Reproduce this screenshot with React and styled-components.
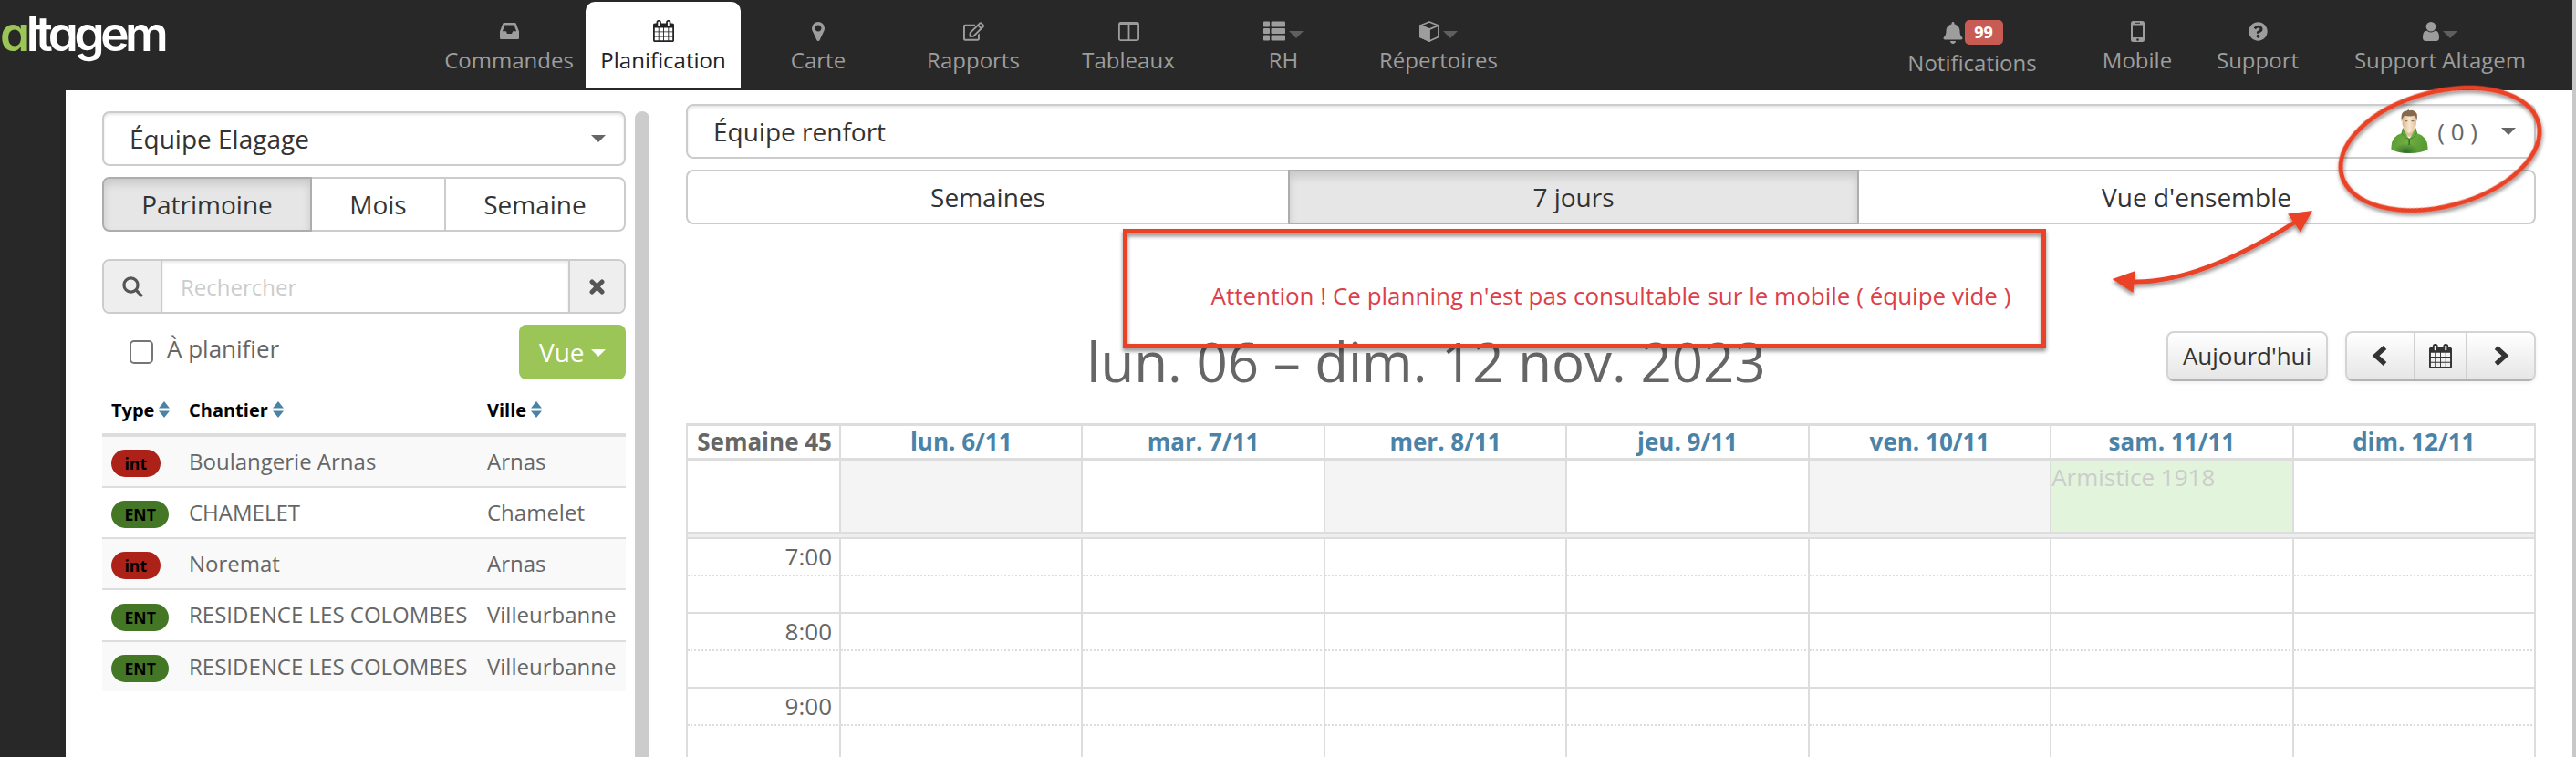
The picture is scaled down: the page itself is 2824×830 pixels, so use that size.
import React from 'react';
import styled, { createGlobalStyle, css } from 'styled-components';
import { FaBell, FaQuestionCircle, FaRegEdit, FaThList } from 'react-icons/fa';

const GlobalStyle = createGlobalStyle`
  *, *::before, *::after { box-sizing: border-box; }
  body { margin: 0; background: #fff; overflow: hidden; }
`;

const Page = styled.div`
  position: relative;
  display: flex;
  flex-direction: column;
  width: 2824px;
  height: 830px;
  overflow: hidden;
  background: #fff;
  border-right: 4px solid #c8c8c8;
  font-family: 'Open Sans', 'Liberation Sans', sans-serif;
  font-size: 26px;
  color: #666;
`;

/* ---------- top bar ---------- */
const TopBar = styled.header`
  display: flex;
  flex: none;
  height: 99px;
  background: #282828;
`;
const Logo = styled.div`
  flex: none;
  width: 474px;
  padding: 5px 0 0;
  font-family: Inter, Lato, sans-serif;
  font-size: 53px;
  font-weight: 600;
  font-feature-settings: 'cv11' 1;
  line-height: 64px;
  letter-spacing: -4.4px;
  color: #fff;
`;
const LogoAccent = styled.span`
  color: #9bc557;
`;
const Nav = styled.nav`
  display: flex;
  margin-left: ${(p) => (p.$end ? 'auto' : '0')};
`;
const NavItem = styled.a`
  display: flex;
  flex-direction: column;
  align-items: center;
  width: ${(p) => p.$width || 170}px;
  height: 94px;
  margin-top: 2px;
  padding-top: 20px;
  border-radius: 10px 10px 0 0;
  font-size: 24px;
  line-height: 30px;
  color: #9d9d9d;
  ${(p) => p.$active && css`
    background: #fff;
    color: #222;
  `}
`;
const NavIcon = styled.span`
  display: flex;
  align-items: center;
  gap: 4px;
  height: ${(p) => (p.$tall ? 27 : 24)}px;
  margin-bottom: 5px;
  svg { display: block; }
`;
const Badge = styled.span`
  margin-left: -3px;
  width: 42px;
  height: 27px;
  border-radius: 5px;
  background: #c95b55;
  color: #fff;
  font-size: 18px;
  font-weight: 700;
  line-height: 27px;
  text-align: center;
`;
const Caret = styled.i`
  width: 0;
  height: 0;
  border: 8px solid transparent;
  border-bottom-width: 0;
  border-top-color: ${(p) => p.$color || '#666'};
  margin-top: ${(p) => p.$drop || 0}px;
`;

/* ---------- body ---------- */
const Body = styled.div`
  display: flex;
  flex: 1;
  min-height: 0;
`;
const Rail = styled.div`
  flex: none;
  width: 72px;
  background: #282828;
`;
const SidePanel = styled.aside`
  display: flex;
  flex-direction: column;
  flex: none;
  width: 574px;
  margin-left: 40px;
  padding-top: 23px;
`;
const ScrollThumb = styled.div`
  flex: none;
  width: 16px;
  margin: 23px 40px 0 10px;
  border-radius: 8px 8px 0 0;
  background: #ccc;
`;
const SelectBox = styled.div`
  display: flex;
  align-items: center;
  flex: none;
  height: 60px;
  padding: 0 20px 0 28px;
  border: 2px solid #ccc;
  border-radius: 8px;
  box-shadow: inset 0 2px 3px rgba(0, 0, 0, 0.1);
  font-size: 28px;
  color: #333;
`;
const SelectLabel = styled.span`
  flex: 1;
`;
const TeamCount = styled.span`
  margin: 0 26px 0 10px;
  font-size: 26px;
  color: #666;
`;
const Tabs = styled.div`
  display: flex;
  flex: none;
  height: 60px;
  margin-top: 12px;
`;
const Tab = styled.button`
  width: ${(p) => p.$width}px;
  margin-left: -2px;
  padding: 0;
  border: 2px solid #ccc;
  background: #fff;
  font: 28px/54px 'Open Sans', sans-serif;
  color: #333;
  &:first-child { margin-left: 0; border-radius: 8px 0 0 8px; }
  &:last-child { border-radius: 0 8px 8px 0; }
  ${(p) => p.$active && css`
    position: relative;
    border-color: #adadad;
    background: #e6e6e6;
    box-shadow: inset 0 6px 10px rgba(0, 0, 0, 0.125);
  `}
`;
const SearchBar = styled.div`
  display: flex;
  flex: none;
  height: 60px;
  margin-top: 30px;
  border: 2px solid #ccc;
  border-radius: 8px;
  overflow: hidden;
`;
const SearchAddon = styled.span`
  display: flex;
  align-items: center;
  justify-content: center;
  width: ${(p) => p.$width}px;
  background: #eee;
  color: #555;
`;
const SearchField = styled.div`
  flex: 1;
  padding-left: 20px;
  border: solid #ccc;
  border-width: 0 2px;
  box-shadow: inset 0 2px 3px rgba(0, 0, 0, 0.09);
  font-size: 24px;
  line-height: 57px;
  color: #ccc;
`;
const FilterRow = styled.div`
  display: flex;
  align-items: center;
  flex: none;
  height: 60px;
  margin-top: 12px;
  padding-left: 30px;
`;
const CheckSquare = styled.span`
  width: 26px;
  height: 26px;
  margin: 0 15px 0 0;
  border: 2px solid #767676;
  border-radius: 5px;
`;
const FilterLabel = styled.span`
  flex: 1;
  padding-bottom: 8px;
`;
const ViewButton = styled.button`
  display: flex;
  align-items: center;
  gap: 7px;
  width: 117px;
  height: 60px;
  padding: 0 0 0 22px;
  border: 0;
  border-radius: 8px;
  background: #9bc557;
  font: 28px 'Open Sans', sans-serif;
  color: #fff;
`;

const SiteTable = styled.div`
  display: flex;
  flex-direction: column;
  margin-top: 9px;
`;
const SiteRow = styled.div`
  display: grid;
  grid-template-columns: 85px 327px 162px;
  align-items: center;
  height: ${(p) => p.$height || 56}px;
  border-bottom: 2px solid ${(p) => (p.$last ? 'transparent' : '#ddd')};
  background: ${(p) => (p.$odd ? '#f9f9f9' : '#fff')};
  background-clip: padding-box;
  font-size: 24px;
`;
const SiteHead = styled(SiteRow)`
  height: 54px;
  border-bottom: 4px solid #ddd;
  font-size: 20px;
  font-weight: 700;
  color: #000;
`;
const HeadCell = styled.div`
  display: flex;
  align-items: center;
  gap: 5px;
  padding: 0 0 2px 10px;
`;
const TagCell = styled.div`
  padding-left: 10px;
`;
const TextCell = styled.div`
  padding: 0 0 2px 10px;
`;
const Tag = styled.span`
  display: inline-block;
  height: 30px;
  margin-top: 4px;
  padding: 0 14.5px;
  border-radius: 15px;
  background: ${(p) => (p.$red ? '#ad2218' : '#447725')};
  font-size: 17.6px;
  font-weight: 700;
  line-height: 30px;
  color: #000;
  vertical-align: top;
`;

/* ---------- planning ---------- */
const Planning = styled.main`
  display: flex;
  flex-direction: column;
  flex: none;
  width: 2028px;
  padding-top: 15px;
`;
const Warning = styled.p`
  margin: 58px 0 0;
  line-height: 40px;
  text-align: center;
  color: #dc3f49;
`;
const PlanningHead = styled.div`
  display: flex;
  align-items: center;
  flex: none;
  height: 56px;
  margin-top: 18px;
`;
const Title = styled.h1`
  flex: 1;
  margin: 12px 0 0;
  font-size: 60px;
  font-weight: 400;
  line-height: 60px;
  text-align: center;
`;
const HeadButtons = styled.div`
  display: flex;
  flex: none;
  height: 55px;
  margin-left: ${(p) => p.$gap || 0}px;
  border: 2px solid #d4d4d4;
  border-bottom-color: #b3b3b3;
  border-radius: 8px;
  background: linear-gradient(#fff, #e6e6e6);
  box-shadow: 0 2px 4px rgba(0, 0, 0, 0.06);
  color: #333;
`;
const HeadButton = styled.button`
  display: flex;
  align-items: center;
  justify-content: center;
  width: ${(p) => p.$width}px;
  padding: 0;
  border: 0;
  border-left: ${(p) => (p.$divided ? '2px solid #d0d0d0' : '0')};
  background: none;
  font: 26px 'Open Sans', sans-serif;
  color: #333;
`;
const Grid = styled.div`
  flex: none;
  margin-top: 46px;
  border: solid #ddd;
  border-width: 3px 0 0 2px;
`;
const GridRow = styled.div`
  display: grid;
  grid-template-columns: 168px repeat(7, 1fr);
  height: ${(p) => p.$height}px;
  line-height: 37px;
`;
const Cell = styled.div`
  border-right: 2px solid #ddd;
  border-bottom: ${(p) => p.$bottom || '2px solid #ddd'};
  background: ${(p) => p.$fill || 'transparent'};
  color: ${(p) => p.$color || 'inherit'};
  white-space: nowrap;
`;
const TimeCell = styled(Cell)`
  padding-right: 8px;
  line-height: 38px;
  text-align: right;
`;
const WeekCell = styled(TimeCell)`
  font-weight: 700;
  line-height: 34px;
`;
const DayCell = styled(Cell)`
  font-weight: 700;
  line-height: 34px;
  text-align: center;
  color: #4b83a8;
`;
const Divider = styled.div`
  height: 6px;
  border-bottom: 2px solid #ddd;
  border-right: 2px solid #ddd;
  background: #eee;
`;
const Overlay = styled.svg`
  position: absolute;
  left: 0;
  top: 0;
  pointer-events: none;
`;

/* ---------- icons ---------- */
const CAL =
  'M192 1664h288v-288h-288v288zm352 0h320v-288h-320v288zm-352-352h288v-320h-288v320zm352 0h320v-320h-320v320zm-352-384h288v-288h-288v288zm736 736h320v-288h-320v288zm-384-736h320v-288h-320v288zm768 736h288v-288h-288v288zm-384-352h320v-320h-320v320zm-352-864v-288q0-13-9.5-22.5t-22.5-9.5h-64q-13 0-22.5 9.5t-9.5 22.5v288q0 13 9.5 22.5t22.5 9.5h64q13 0 22.5-9.5t9.5-22.5zm736 864h288v-320h-288v320zm-384-384h320v-288h-320v288zm384 0h288v-288h-288v288zm32-480v-288q0-13-9.5-22.5t-22.5-9.5h-64q-13 0-22.5 9.5t-9.5 22.5v288q0 13 9.5 22.5t22.5 9.5h64q13 0 22.5-9.5t9.5-22.5zm384-64v1280q0 52-38 90t-90 38h-1408q-52 0-90-38t-38-90v-1280q0-52 38-90t90-38h128v-96q0-66 47-113t113-47h64q66 0 113 47t47 113v96h384v-96q0-66 47-113t113-47h64q66 0 113 47t47 113v96h128q52 0 90 38t38 90z';
const PIN =
  'M1152 640q0-106-75-181t-181-75-181 75-75 181 75 181 181 75 181-75 75-181zm256 0q0 109-33 179l-364 774q-16 33-47.5 52t-67.5 19-67.5-19-46.5-52l-365-774q-33-70-33-179 0-212 150-362t362-150 362 150 150 362z';
const USER =
  'M1536 1399q0 109-62.5 187t-150.5 78h-854q-88 0-150.5-78t-62.5-187q0-85 8.5-160.5t31.5-152 58.5-131 94-89 134.5-34.5q131 128 313 128t313-128q76 0 134.5 34.5t94 89 58.5 131 31.5 152 8.5 160.5zm-256-887q0 159-112.5 271.5t-271.5 112.5-271.5-112.5-112.5-271.5 112.5-271.5 271.5-112.5 271.5 112.5 112.5 271.5z';

const CalendarIcon = ({ w = 23, h = 24 }) => (
  <svg width={w} height={h} viewBox="64 0 1664 1792" preserveAspectRatio="none" fill="currentColor"><path d={CAL} /></svg>
);
const PinIcon = () => (
  <svg width="14" height="21" viewBox="384 128 1024 1536" fill="currentColor"><path d={PIN} /></svg>
);
const UserIcon = () => (
  <svg width="18" height="21" viewBox="256 128 1280 1536" preserveAspectRatio="none" fill="currentColor"><path d={USER} /></svg>
);
const InboxIcon = () => (
  <svg width="21" height="18" viewBox="0 0 21 18" fill="currentColor">
    <path fillRule="evenodd" d="M4.6 0h11.8q1 0 1.4 1L21 9.6V16.8q0 1.2-1.2 1.2H1.2Q0 18 0 16.8V9.6L3.2 1Q3.6 0 4.6 0zM5.4 2.5L2.9 9.3H6.8L8 12h5l1.2-2.7h3.9L15.6 2.5z" />
  </svg>
);
const ColumnsIcon = () => (
  <svg width="23" height="21" viewBox="0 0 23 21" fill="none" stroke="currentColor" strokeWidth="1.8">
    <rect x="0.9" y="0.9" width="21.2" height="19.2" rx="1.5" />
    <path d="M1 2.2h21M11.5 1v19" />
  </svg>
);
const CubeIcon = () => (
  <svg width="22" height="23" viewBox="0 0 22 23" fill="none" stroke="currentColor" strokeWidth="1.8" strokeLinejoin="round">
    <path d="M11 1L21 5v12.5L11 22 1 17.500V5z" />
    <path d="M1 5l10 4.200L21 5" />
    <path d="M1 5l10 4.200V22L1 17.500z" fill="currentColor" />
  </svg>
);
const PhoneIcon = () => (
  <svg width="15" height="23" viewBox="0 0 15 23" fill="currentColor">
    <path fillRule="evenodd" d="M2.5 0h10Q15 0 15 2.5v18Q15 23 12.500 23h-10Q0 23 0 20.500v-18Q0 0 2.500 0zM2 4.500v13.500h11V4.500zM5 1.800v1h5v-1zM7.500 19.200a1.300 1.300 0 1 0 .01 0z" />
  </svg>
);
const SearchIcon = () => (
  <svg width="23" height="23" viewBox="0 0 23 23" fill="none" stroke="currentColor" strokeWidth="3.2" strokeLinecap="round">
    <circle cx="9.5" cy="9.5" r="7.6" />
    <path d="M15.5 15.5L20.8 20.8" />
  </svg>
);
const CrossIcon = () => (
  <svg width="17" height="17" viewBox="0 0 17 17" fill="none" stroke="currentColor" strokeWidth="5" strokeLinecap="round">
    <path d="M3 3l11 11M14 3L3 14" />
  </svg>
);
const Chevron = ({ right }) => (
  <svg width="20" height="22" viewBox="0 0 20 22" fill="none" stroke="currentColor" strokeWidth="5.2">
    <path d={right ? 'M4.500 2L14.500 11 4.500 20' : 'M14.500 2L4.500 11l10 9'} />
  </svg>
);
const SortIcon = () => (
  <svg width="12" height="18" viewBox="0 0 12 18" fill="#4b83a8">
    <path d="M0 7.5L6 0l6 7.5zM0 10.5h12L6 18z" />
  </svg>
);
const Avatar = () => (
  <svg width="41" height="48" viewBox="0 0 41 48">
    <defs>
      <linearGradient id="coat" x1="0" y1="0" x2="1" y2="0.3">
        <stop offset="0" stopColor="#4c962f" />
        <stop offset="0.55" stopColor="#74ae41" />
        <stop offset="1" stopColor="#579c33" />
      </linearGradient>
      <radialGradient id="shade" cx="0.4" cy="0.95" r="0.35">
        <stop offset="0" stopColor="#2b6b2b" />
        <stop offset="1" stopColor="#2b6b2b" stopOpacity="0" />
      </radialGradient>
      <linearGradient id="skin" x1="0" x2="1">
        <stop offset="0" stopColor="#dcb58d" />
        <stop offset="0.5" stopColor="#f8e6d0" />
        <stop offset="1" stopColor="#e4c09a" />
      </linearGradient>
    </defs>
    <path d="M14 22h12.5L24 32l-4 5-4.500-6z" fill="#f1ece6" />
    <path d="M14 21l6 5 6-5v5l-5.500 4L14 26z" fill="#e3bf99" />
    <path d="M13.500 20.500L12 26Q1 29 0.500 41v3Q8 48 20.500 48T40.500 44V41Q39.500 29 28.500 26L27 20.500 20.200 33z" fill="url(#coat)" />
    <path d="M13.500 20.500L12 26Q1 29 0.500 41v3Q8 48 20.500 48T40.500 44V41Q39.500 29 28.500 26L27 20.500 20.200 33z" fill="url(#shade)" />
    <path d="M13.500 20.500L12 26l4.500 5.500L20 32M27 20.500L28.500 26 24 31.500l-3.500.5" fill="none" stroke="#3c8228" strokeWidth="0.9" />
    <path d="M20.200 32v7" stroke="#2f6d2b" strokeWidth="1.5" />
    <path d="M12.500 9Q12.500 4 20.500 4T28 9v7q-1.500 6-5 8.500-2.700 1.500-5.500 0Q13.500 21 12.500 16z" fill="url(#skin)" />
    <path d="M11.800 13Q10.500 5 14 2.500l2-1 1 .3L19.500 0l.8 1.200L23 .8q5 1.500 5.800 4.700 .5 4-.5 7.500-.5-5-2.300-6.300-5 1.500-11 0-2 1.500-3.200 6.300z" fill="#84694d" />
    <path d="M15.300 12.600h3M22.500 12.600h3" stroke="#8f7358" strokeWidth="1.3" />
  </svg>
);

/* ---------- data ---------- */
const NAV = [
  { label: 'Commandes', icon: <InboxIcon />, width: 168 },
  { label: 'Planification', icon: <CalendarIcon />, active: true },
  { label: 'Carte', icon: <PinIcon /> },
  { label: 'Rapports', icon: <FaRegEdit size={23} /> },
  { label: 'Tableaux', icon: <ColumnsIcon /> },
  { label: 'RH', icon: <FaThList size={24} />, menu: true },
  { label: 'Répertoires', icon: <CubeIcon />, menu: true },
];
const USER_NAV = [
  { label: 'Notifications', icon: <FaBell size={24} />, badge: '99', width: 208 },
  { label: 'Mobile', icon: <PhoneIcon />, width: 154 },
  { label: 'Support', icon: <FaQuestionCircle size={21} />, width: 110 },
  { label: 'Support Altagem', icon: <UserIcon />, menu: true, width: 290 },
];
const SITES = [
  ['int', 'Boulangerie Arnas', 'Arnas'],
  ['ENT', 'CHAMELET', 'Chamelet'],
  ['int', 'Noremat', 'Arnas'],
  ['ENT', 'RESIDENCE LES COLOMBES', 'Villeurbanne'],
  ['ENT', 'RESIDENCE LES COLOMBES', 'Villeurbanne'],
];
const DAYS = [
  { name: 'lun. 6/11', fill: '#f4f4f4' },
  { name: 'mar. 7/11' },
  { name: 'mer. 8/11', fill: '#f4f4f4' },
  { name: 'jeu. 9/11' },
  { name: 'ven. 10/11', fill: '#f4f4f4' },
  { name: 'sam. 11/11', fill: '#e2f4dc', note: 'Armistice 1918' },
  { name: 'dim. 12/11' },
];
const HOURS = ['7:00', '8:00', '9:00'];

const NavEntry = ({ item }) => (
  <NavItem $active={item.active} $width={item.width}>
    <NavIcon $tall={Boolean(item.badge)}>
      {item.icon}
      {item.badge && <Badge>{item.badge}</Badge>}
      {item.menu && <Caret $color="#5f5f5f" $drop={8} />}
    </NavIcon>
    {item.label}
  </NavItem>
);

const Annotations = () => (
  <Overlay width="2824" height="830" viewBox="0 0 2824 830">
    <defs>
      <filter id="drop" x="-10%" y="-10%" width="120%" height="125%">
        <feDropShadow dx="0" dy="3" stdDeviation="2" floodColor="#000" floodOpacity="0.45" />
      </filter>
    </defs>
    <g fill="none" stroke="#ea4226" strokeWidth="5">
      <rect x="1233.5" y="253.5" width="1007" height="126" filter="url(#drop)" />
      <ellipse cx="2675" cy="163.5" rx="111.6" ry="62.7" transform="rotate(-14.9 2675 163.5)" filter="url(#drop)" />
      <g filter="url(#drop)">
        <path d="M2338 309Q2410 311 2517 243" />
        <path d="M2315.700 306L2341 297l-2.500 24zM2535 231l-27 3.500 14 20z" fill="#ea4226" stroke="none" />
      </g>
    </g>
  </Overlay>
);

export default function App() {
  return (
    <Page>
      <GlobalStyle />
      <TopBar>
        <Logo><LogoAccent>a</LogoAccent>ltagem</Logo>
        <Nav>{NAV.map((n) => <NavEntry key={n.label} item={n} />)}</Nav>
        <Nav $end>{USER_NAV.map((n) => <NavEntry key={n.label} item={n} />)}</Nav>
      </TopBar>
      <Body>
        <Rail />
        <SidePanel>
          <SelectBox>
            <SelectLabel>Équipe Elagage</SelectLabel>
            <Caret />
          </SelectBox>
          <Tabs>
            <Tab $active $width={230}>Patrimoine</Tab>
            <Tab $width={149}>Mois</Tab>
            <Tab $width={199}>Semaine</Tab>
          </Tabs>
          <SearchBar>
            <SearchAddon $width={62}><SearchIcon /></SearchAddon>
            <SearchField>Rechercher</SearchField>
            <SearchAddon $width={59}><CrossIcon /></SearchAddon>
          </SearchBar>
          <FilterRow>
            <CheckSquare />
            <FilterLabel>À planifier</FilterLabel>
            <ViewButton>Vue<Caret $color="#fff" $drop={2} /></ViewButton>
          </FilterRow>
          <SiteTable>
            <SiteHead>
              {['Type', 'Chantier', 'Ville'].map((h) => <HeadCell key={h}>{h}<SortIcon /></HeadCell>)}
            </SiteHead>
            {SITES.map(([type, site, town], i) => (
              <SiteRow key={i} $odd={i % 2 === 0} $last={i === 4} $height={i === 3 ? 57 : 56}>
                <TagCell><Tag $red={type === 'int'}>{type}</Tag></TagCell>
                <TextCell>{site}</TextCell>
                <TextCell>{town}</TextCell>
              </SiteRow>
            ))}
          </SiteTable>
        </SidePanel>
        <ScrollThumb />
        <Planning>
          <SelectBox>
            <SelectLabel>Équipe renfort</SelectLabel>
            <Avatar />
            <TeamCount>( 0 )</TeamCount>
            <Caret />
          </SelectBox>
          <Tabs>
            <Tab $width={662}>Semaines</Tab>
            <Tab $active $width={626}>7 jours</Tab>
            <Tab $width={744}>Vue d'ensemble</Tab>
          </Tabs>
          <Warning>Attention ! Ce planning n'est pas consultable sur le mobile ( équipe vide )</Warning>
          <PlanningHead>
            <Title>lun. 06 – dim. 12 nov. 2023</Title>
            <HeadButtons>
              <HeadButton $width={173}>Aujourd'hui</HeadButton>
            </HeadButtons>
            <HeadButtons $gap={19}>
              <HeadButton $width={73}><Chevron /></HeadButton>
              <HeadButton $width={57} $divided><CalendarIcon w={25} h={27} /></HeadButton>
              <HeadButton $width={75} $divided><Chevron right /></HeadButton>
            </HeadButtons>
          </PlanningHead>
          <Grid>
            <GridRow $height={38}>
              <WeekCell $bottom="3px solid #ddd">Semaine 45</WeekCell>
              {DAYS.map((d) => <DayCell key={d.name} $bottom="3px solid #ddd">{d.name}</DayCell>)}
            </GridRow>
            <GridRow $height={80}>
              <TimeCell />
              {DAYS.map((d) => <Cell key={d.name} $fill={d.fill} $color="#ccc">{d.note}</Cell>)}
            </GridRow>
            <Divider />
            {HOURS.map((hour) => (
              <React.Fragment key={hour}>
                <GridRow $height={41}>
                  <TimeCell $bottom="2px dotted #ddd">{hour}</TimeCell>
                  {DAYS.map((d) => <Cell key={d.name} $bottom="2px dotted #ddd" />)}
                </GridRow>
                <GridRow $height={41}>
                  <TimeCell />
                  {DAYS.map((d) => <Cell key={d.name} />)}
                </GridRow>
              </React.Fragment>
            ))}
          </Grid>
        </Planning>
      </Body>
      <Annotations />
    </Page>
  );
}
